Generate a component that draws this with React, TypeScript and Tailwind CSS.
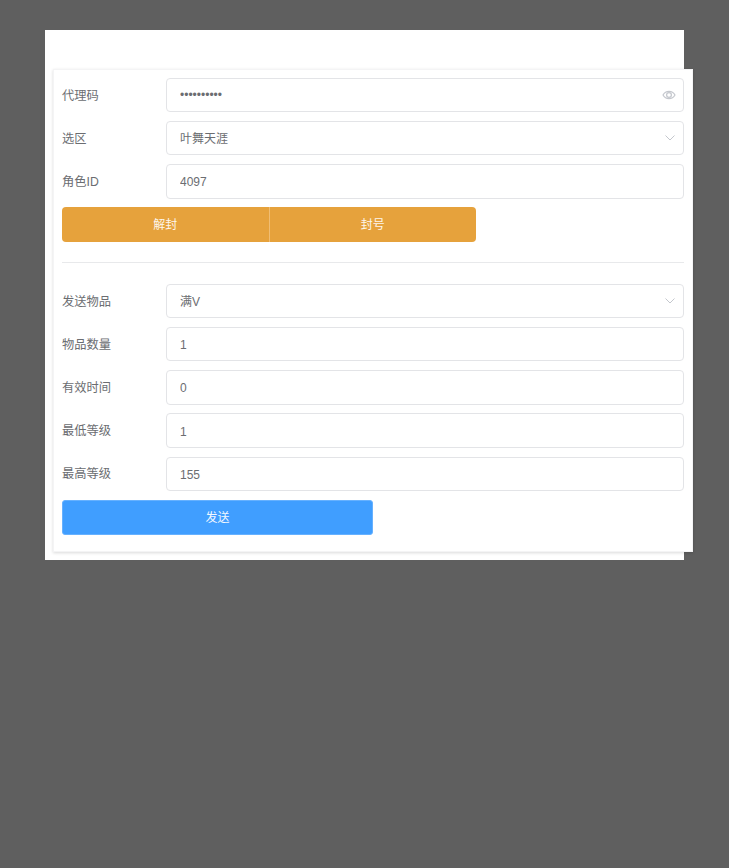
const FONT = "font-['Liberation_Sans','Noto_Sans_CJK_SC',sans-serif]";

function EyeIcon() {
  return (
    <svg width="14" height="14" viewBox="0 0 14 14" fill="none" stroke="#c4c7cd" strokeWidth="1.2">
      <path d="M1 7c1.400-2.400 3.500-3.600 6-3.600S11.600 4.600 13 7c-1.400 2.400-3.500 3.600-6 3.600S2.400 9.400 1 7z" />
      <circle cx="7" cy="7" r="2.400" />
    </svg>
  );
}

function ChevronIcon() {
  return (
    <svg width="12" height="8" viewBox="0 0 12 8" fill="none" stroke="#c4c7cd" strokeWidth="1">
      <path d="M1.500 1.500 6 6l4.500-4.500" />
    </svg>
  );
}

interface FieldProps {
  label: string;
  value: string;
  type?: string;
  icon?: "eye" | "chevron";
}

function Field({ label, value, type = "text", icon }: FieldProps) {
  // digits sit a pixel lower than the CJK select values
  const nudge = icon === "chevron" ? "pb-[2px]" : icon === "eye" ? "" : "pt-[2px]";

  return (
    <div className="mb-[8.85px] flex h-[34.3px] items-center">
      <label className="w-[104px] shrink-0 pt-[2px] text-[12.25px] text-[#6b6d71]">{label}</label>
      <div className="relative h-full flex-1">
        <input
          readOnly
          type={type}
          value={value}
          className={`h-full w-full rounded border border-[#e3e4e7] bg-white px-[13px] text-xs text-[#6b6d71] outline-none ${nudge}`}
        />
        {icon && (
          <span className="absolute inset-y-0 right-2 flex items-center">
            {icon === "eye" ? <EyeIcon /> : <ChevronIcon />}
          </span>
        )}
      </div>
    </div>
  );
}

export default function App() {
  return (
    <div className={`min-h-screen overflow-hidden bg-[#5f5f5f] pt-[30px] pl-[45px] ${FONT}`}>
      <div className="h-[530px] w-[639px] bg-white pt-[39px] pl-2">
        <div className="h-[483px] w-[640px] border border-[#f4f4f5] bg-white p-2 shadow-[0_1px_3px_rgba(0,0,0,0.15)]">
          <Field label="代理码" value="1234567890" type="password" icon="eye" />
          <Field label="选区" value="叶舞天涯" icon="chevron" />
          <Field label="角色ID" value="4097" />

          <div className="flex h-[35px] w-[414px] text-xs text-[#fdf6ec]">
            <button className="flex-1 rounded-l bg-[#e6a23c]">解封</button>
            <button className="flex-1 rounded-r border-l border-[#f0bd73] bg-[#e6a23c]">封号</button>
          </div>

          <div className="mt-5 mb-[20.55px] h-px bg-[#e8e9eb]" />

          <Field label="发送物品" value="满V" icon="chevron" />
          <Field label="物品数量" value="1" />
          <Field label="有效时间" value="0" />
          <Field label="最低等级" value="1" />
          <Field label="最高等级" value="155" />

          <button className="h-[35px] w-[311px] rounded-[3px] border border-[#66b1ff] bg-[#409eff] pt-px text-xs text-[#f2f8ff]">
            发送
          </button>
        </div>
      </div>
    </div>
  );
}
